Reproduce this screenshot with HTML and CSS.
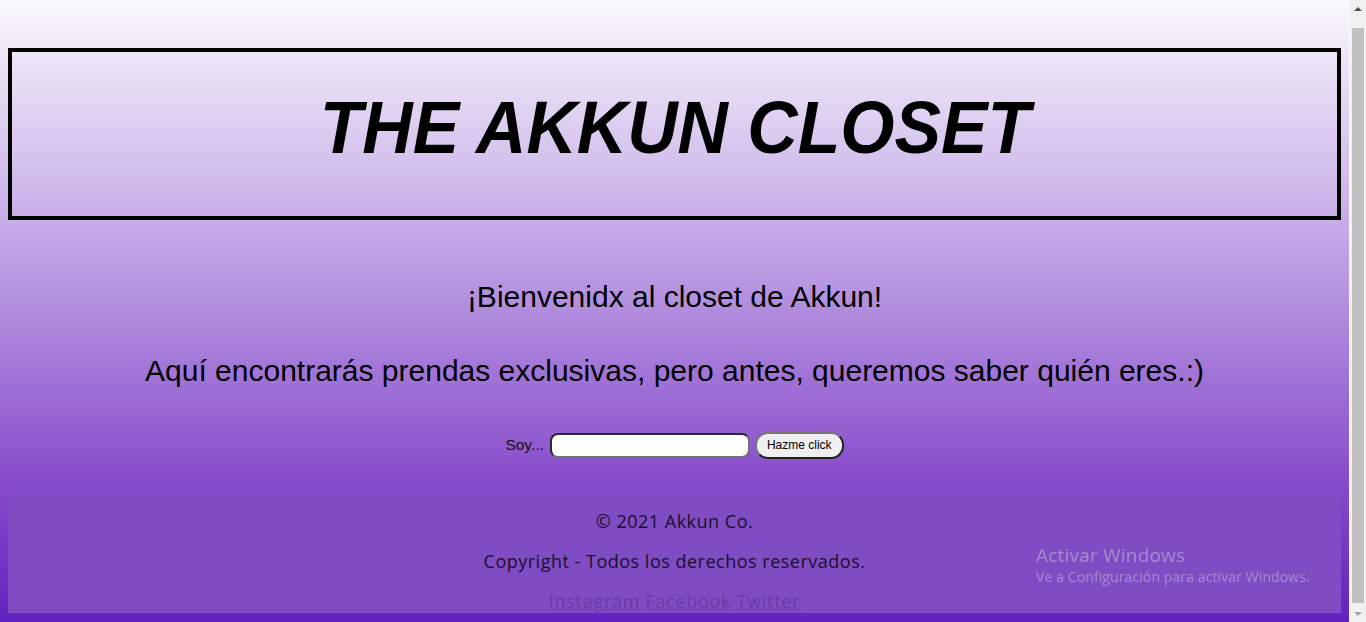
FILE: index.html
```html
<!DOCTYPE html>
<html lang="es">
<head>
<meta charset="utf-8">
<title>The Akkun Closet</title>
<link rel="stylesheet" href="styles.css">
</head>
<body>
<div class="window">
  <div class="page">
    <header class="banner">
      <h1 class="title">THE AKKUN CLOSET</h1>
    </header>
    <main class="intro">
      <h2 class="lead">¡Bienvenidx al closet de Akkun!</h2>
      <h2 class="lead lead-second">Aquí encontrarás prendas exclusivas, pero antes, queremos saber quién eres.:)</h2>
      <form class="who">
        <label class="who-label" for="soy">Soy...</label>
        <input class="who-input" id="soy" type="text">
        <button class="who-btn" type="button">Hazme click</button>
      </form>
    </main>
    <footer class="foot">
      <p class="foot-line">© 2021 Akkun Co.</p>
      <p class="foot-line">Copyright - Todos los derechos reservados.</p>
      <p class="foot-line foot-links"><a href="#">Instagram</a> <a href="#">Facebook</a> <a href="#">Twitter</a></p>
    </footer>
  </div>
  <div class="scrollbar">
    <div class="sb-arrow sb-up"></div>
    <div class="sb-thumb"></div>
    <div class="sb-arrow sb-down"></div>
  </div>
</div>
<div class="watermark">
  <div class="wm-title">Activar Windows</div>
  <div class="wm-sub">Ve a Configuración para activar Windows.</div>
</div>
</body>
</html>
```

FILE: styles.css
```css
html, body {
  margin: 0;
  padding: 0;
  height: 622px;
  overflow: hidden;
}

.window {
  display: flex;
  height: 622px;
}

.page {
  flex: 1;
  display: flex;
  flex-direction: column;
  padding: 0 8px;
  background: linear-gradient(to bottom, #faf9fc 0px, #c2a6e6 240px, #8a50cc 470px, #6020c0 630px);
  font-family: "Liberation Sans", Arial, sans-serif;
  color: #000;
}

.banner {
  margin-top: 48px;
  height: 172px;
  box-sizing: border-box;
  border: 4px solid #000;
  padding-bottom: 14px;
  display: flex;
  align-items: center;
  justify-content: center;
}

.title {
  margin: 0;
  font-family: "Liberation Sans", Arial, sans-serif;
  font-size: 75px;
  font-weight: bold;
  font-style: italic;
  line-height: 1;
  transform: scaleX(0.93);
  letter-spacing: 0;
}

.intro {
  display: flex;
  flex-direction: column;
  align-items: center;
}

.lead {
  margin: 60px 0 0;
  font-size: 30px;
  font-weight: normal;
  line-height: 34px;
}

.lead-second {
  margin-top: 40px;
}

.who {
  margin-top: 44px;
  display: flex;
  align-items: center;
  gap: 5px;
  height: 26px;
}

.who-label {
  font-size: 15.5px;
  color: #111;
  margin-right: 1px;
}

.who-input {
  width: 200px;
  height: 25px;
  box-sizing: border-box;
  border: 2px solid #2a2a2a;
  border-bottom-color: #707070;
  border-right-color: #707070;
  border-radius: 8px;
  background: #fff;
  margin: 0;
}

.who-btn {
  height: 27px;
  box-sizing: border-box;
  padding: 0 10px;
  border: 2px solid #222;
  border-top-color: #777;
  border-left-color: #777;
  border-radius: 13px;
  background: #efefef;
  font-family: "Liberation Sans", Arial, sans-serif;
  font-size: 12px;
  color: #000;
  margin: 0;
}

.foot {
  margin-top: 36px;
  height: 119px;
  box-sizing: border-box;
  padding-top: 16px;
  background: #804cc4;
  display: flex;
  flex-direction: column;
  align-items: center;
  gap: 18px;
  font-family: "Open Sans", "Noto Sans", sans-serif;
  font-size: 18px;
  letter-spacing: 0.5px;
  color: #1a0e2e;
}

.foot-line {
  margin: 0;
  line-height: 22px;
}

.foot-links {
  letter-spacing: 0.7px;
}

.foot-links a {
  color: #6a3aa6;
  text-decoration: underline;
}

.scrollbar {
  width: 17px;
  display: flex;
  flex-direction: column;
  background: #f1f1f1;
  border-left: 1px solid #fafafa;
  box-sizing: border-box;
}

.sb-arrow {
  height: 17px;
  display: flex;
  align-items: center;
  justify-content: center;
}

.sb-up::before {
  content: "";
  border-left: 4px solid transparent;
  border-right: 4px solid transparent;
  border-bottom: 4px solid #505050;
}

.sb-down::before {
  content: "";
  border-left: 4px solid transparent;
  border-right: 4px solid transparent;
  border-top: 4px solid #a3a3a3;
}

.sb-thumb {
  margin: 11px 2px 0;
  height: 575px;
  background: #c1c1c1;
}

.sb-down {
  margin-top: auto;
}

.watermark {
  position: fixed;
  left: 1036px;
  top: 543px;
  font-family: "Open Sans", "Noto Sans", sans-serif;
  color: rgba(200, 190, 215, 0.55);
}

.wm-title {
  font-size: 19px;
  line-height: 24px;
  letter-spacing: 0.2px;
}

.wm-sub {
  font-size: 14px;
  line-height: 20px;
  letter-spacing: 0.1px;
}
```
